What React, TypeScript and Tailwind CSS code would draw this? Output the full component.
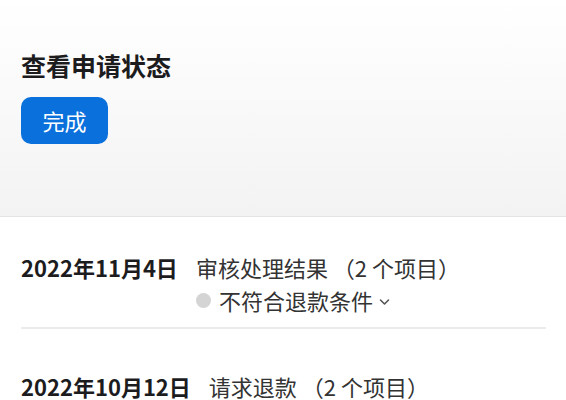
const font = { fontFamily: '"Noto Sans CJK SC", "Noto Sans", sans-serif' };

type Entry = {
  date: string;
  title: string;
  count: number;
  status?: string;
};

const entries: Entry[] = [
  { date: "2022年11月4日", title: "审核处理结果", count: 2, status: "不符合退款条件" },
  { date: "2022年10月12日", title: "请求退款", count: 2 },
];

function Chevron() {
  return (
    <svg className="ml-[5px] mt-[3px] h-[10px] w-[13px]" viewBox="0 0 12 10" fill="none" stroke="#555" strokeWidth={1.6}>
      <path strokeLinecap="round" strokeLinejoin="round" d="M2 3l4 4 4-4" />
    </svg>
  );
}

function EntryRow({ entry, first }: { entry: Entry; first: boolean }) {
  return (
    <div className={first ? "pt-[34px] pb-[10px]" : "pt-[41px]"}>
      <div className="flex gap-[18px] text-[22px] leading-[33px]">
        <span className="font-bold text-[#1c1c1e]">{entry.date}</span>
        <div className="flex flex-col text-[#333]">
          <span>
            {entry.title} （{entry.count} 个项目）
          </span>
          {entry.status && (
            <div className="flex items-center">
              <span className="mr-[8px] h-[15px] w-[15px] rounded-full bg-[#d4d4d4]" />
              <span>{entry.status}</span>
              <Chevron />
            </div>
          )}
        </div>
      </div>
    </div>
  );
}

export default function App() {
  return (
    <div className="h-[400px] w-[566px] overflow-hidden bg-white" style={font}>
      <div className="border-b border-[#e4e4e4] bg-gradient-to-b from-white to-[#f3f3f3] px-[21px] pt-[49px] pb-[72px]">
        <h1 className="text-[25px] font-bold leading-[32px] text-[#1c1c1e]">查看申请状态</h1>
        <button className="mt-[16px] flex h-[47px] w-[87px] items-center justify-center rounded-[10px] bg-[#0a70dc] text-[22px] text-white">
          完成
        </button>
      </div>
      <div className="px-[21px]">
        {entries.map((e, i) => (
          <div key={e.date}>
            <EntryRow entry={e} first={i === 0} />
            {i === 0 && <div className="h-[2px] w-[525px] bg-[#ebebeb]" />}
          </div>
        ))}
      </div>
    </div>
  );
}
